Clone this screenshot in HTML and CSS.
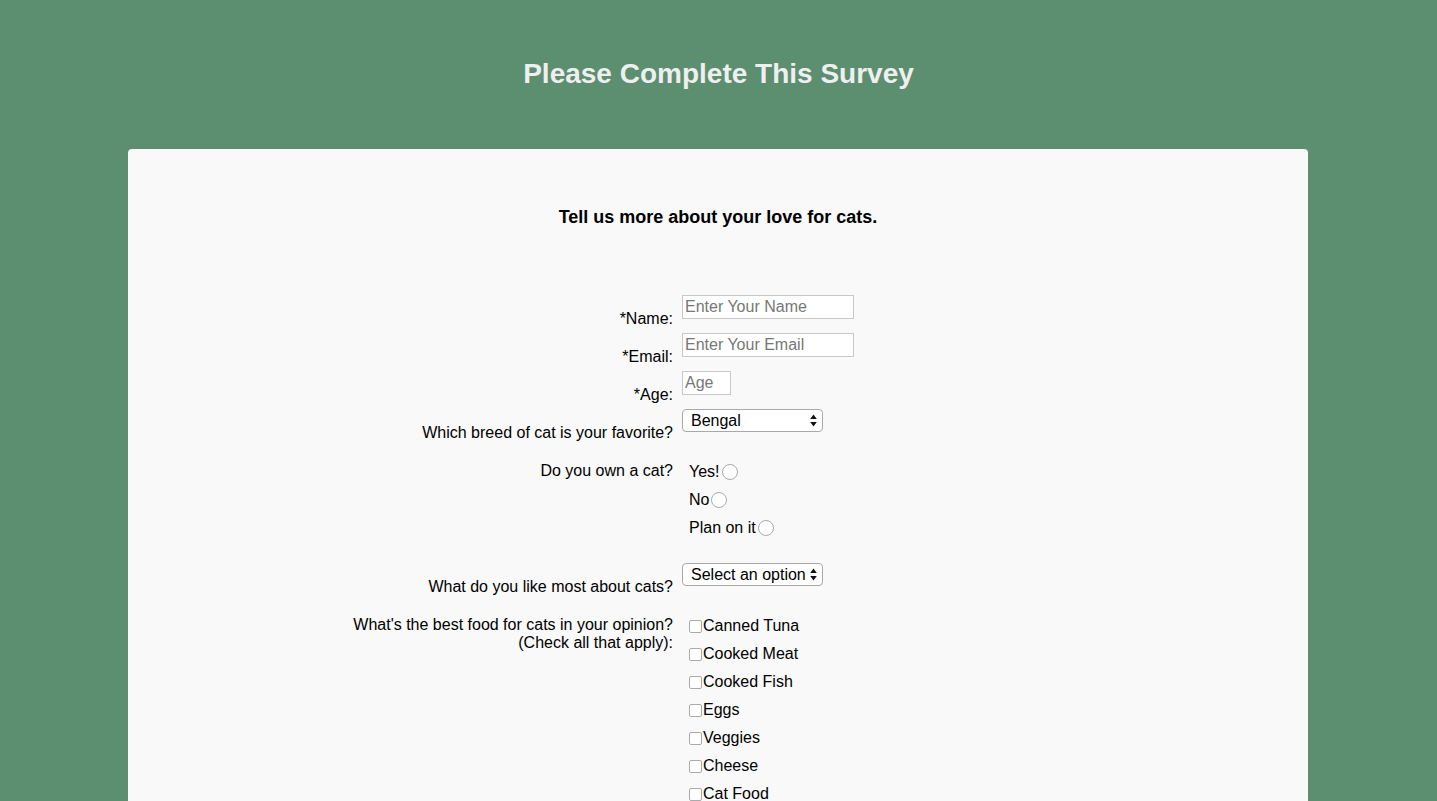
FILE: index.html
```html
<!DOCTYPE html>
<html lang="en">
<head>
<meta charset="utf-8">
<title>Survey</title>
<link rel="stylesheet" href="styles.css">
</head>
<body>
<header class="header">
  <h1 class="title">Please Complete This Survey</h1>
</header>
<main class="card">
  <p class="subtitle">Tell us more about your love for cats.</p>
  <form class="form">
    <div class="row">
      <label class="label" for="name">*Name:</label>
      <div class="control"><input class="text-input wide" id="name" type="text" placeholder="Enter Your Name"></div>
    </div>
    <div class="row">
      <label class="label" for="email">*Email:</label>
      <div class="control"><input class="text-input wide" id="email" type="email" placeholder="Enter Your Email"></div>
    </div>
    <div class="row">
      <label class="label" for="age">*Age:</label>
      <div class="control"><input class="text-input narrow" id="age" type="text" placeholder="Age"></div>
    </div>
    <div class="row">
      <label class="label" for="breed">Which breed of cat is your favorite?</label>
      <div class="control">
        <span class="select-wrap">
          <select class="select" id="breed">
            <option>Bengal</option>
            <option>Siamese</option>
            <option>Persian</option>
          </select>
          <svg class="arrows" width="7" height="13" viewBox="0 0 7 13"><path d="M3.5 0.5 L6.8 5 L0.2 5 Z M0.2 8 L6.8 8 L3.5 12.5 Z" fill="#111"/></svg>
        </span>
      </div>
    </div>
    <div class="row row-group">
      <div class="label">Do you own a cat?</div>
      <div class="control group">
        <label class="option">Yes!<input class="radio" type="radio" name="own"></label>
        <label class="option">No<input class="radio" type="radio" name="own"></label>
        <label class="option">Plan on it<input class="radio" type="radio" name="own"></label>
      </div>
    </div>
    <div class="row">
      <label class="label" for="like">What do you like most about cats?</label>
      <div class="control">
        <span class="select-wrap">
          <select class="select" id="like">
            <option>Select an option</option>
            <option>Personality</option>
            <option>Fur</option>
          </select>
          <svg class="arrows" width="7" height="13" viewBox="0 0 7 13"><path d="M3.5 0.5 L6.8 5 L0.2 5 Z M0.2 8 L6.8 8 L3.5 12.5 Z" fill="#111"/></svg>
        </span>
      </div>
    </div>
    <div class="row">
      <div class="label">What's the best food for cats in your opinion?<br>(Check all that apply):</div>
      <div class="control group">
        <label class="option"><input class="check" type="checkbox">Canned Tuna</label>
        <label class="option"><input class="check" type="checkbox">Cooked Meat</label>
        <label class="option"><input class="check" type="checkbox">Cooked Fish</label>
        <label class="option"><input class="check" type="checkbox">Eggs</label>
        <label class="option"><input class="check" type="checkbox">Veggies</label>
        <label class="option"><input class="check" type="checkbox">Cheese</label>
        <label class="option"><input class="check" type="checkbox">Cat Food</label>
      </div>
    </div>
  </form>
</main>
</body>
</html>
```
FILE: styles.css
```css
* { box-sizing: border-box; }

html, body {
  margin: 0;
  padding: 0;
  background: #5c8e70;
  font-family: "Liberation Sans", Arial, Helvetica, sans-serif;
  color: #000;
}

.header {
  padding-top: 57px;
  height: 149px;
  text-align: center;
}

.title {
  margin: 0;
  font-size: 28px;
  line-height: 34px;
  font-weight: bold;
  color: #efefef;
}

.card {
  width: 1180px;
  margin-left: calc((100% - 1181px) / 2);
  background: #f9f9f9;
  border-radius: 4px 4px 0 0;
  padding-top: 57px;
  min-height: 652px;
}

.subtitle {
  margin: 0;
  text-align: center;
  font-size: 18px;
  line-height: 22px;
  font-weight: bold;
}

.form {
  margin-top: 67px;
  font-size: 16px;
}

.row {
  display: flex;
  align-items: flex-start;
  margin-bottom: 5px;
}

.label {
  width: 545px;
  flex: none;
  text-align: right;
  padding-top: 15px;
  line-height: 18px;
}

.control {
  margin-left: 9px;
}

.text-input {
  display: block;
  height: 24px;
  border: 1px solid #c8c8c8;
  background: #fff;
  font: inherit;
  font-size: 16px;
  padding: 0 2px;
  margin: 0;
  color: #000;
  outline: none;
}

.text-input::placeholder { color: #777; }

.wide { width: 172px; }
.narrow { width: 49px; }

.select-wrap {
  position: relative;
  display: block;
  width: 141px;
}

.select {
  display: block;
  width: 141px;
  height: 23px;
  -webkit-appearance: none;
  appearance: none;
  border: 1px solid #a9a9a9;
  border-radius: 4px;
  background: #fff;
  font: inherit;
  font-size: 16px;
  padding: 0 0 0 8px;
  margin: 0;
  color: #000;
  line-height: 21px;
}

.arrows {
  position: absolute;
  right: 6px;
  top: 5px;
  pointer-events: none;
}

.group {
  padding-top: 11px;
  padding-left: 7px;
}

.row-group .group { padding-bottom: 16px; }

.option {
  display: flex;
  align-items: center;
  height: 28px;
  line-height: 18px;
}

.radio {
  -webkit-appearance: none;
  appearance: none;
  width: 16px;
  height: 16px;
  margin: 0 0 0 2px;
  border: 1px solid #aaa;
  border-radius: 50%;
  background: #fff;
}

.check {
  -webkit-appearance: none;
  appearance: none;
  width: 13px;
  height: 13px;
  margin: 0 1px 0 0;
  border: 1px solid #aaa;
  border-radius: 2px;
  background: #fff;
}
```
